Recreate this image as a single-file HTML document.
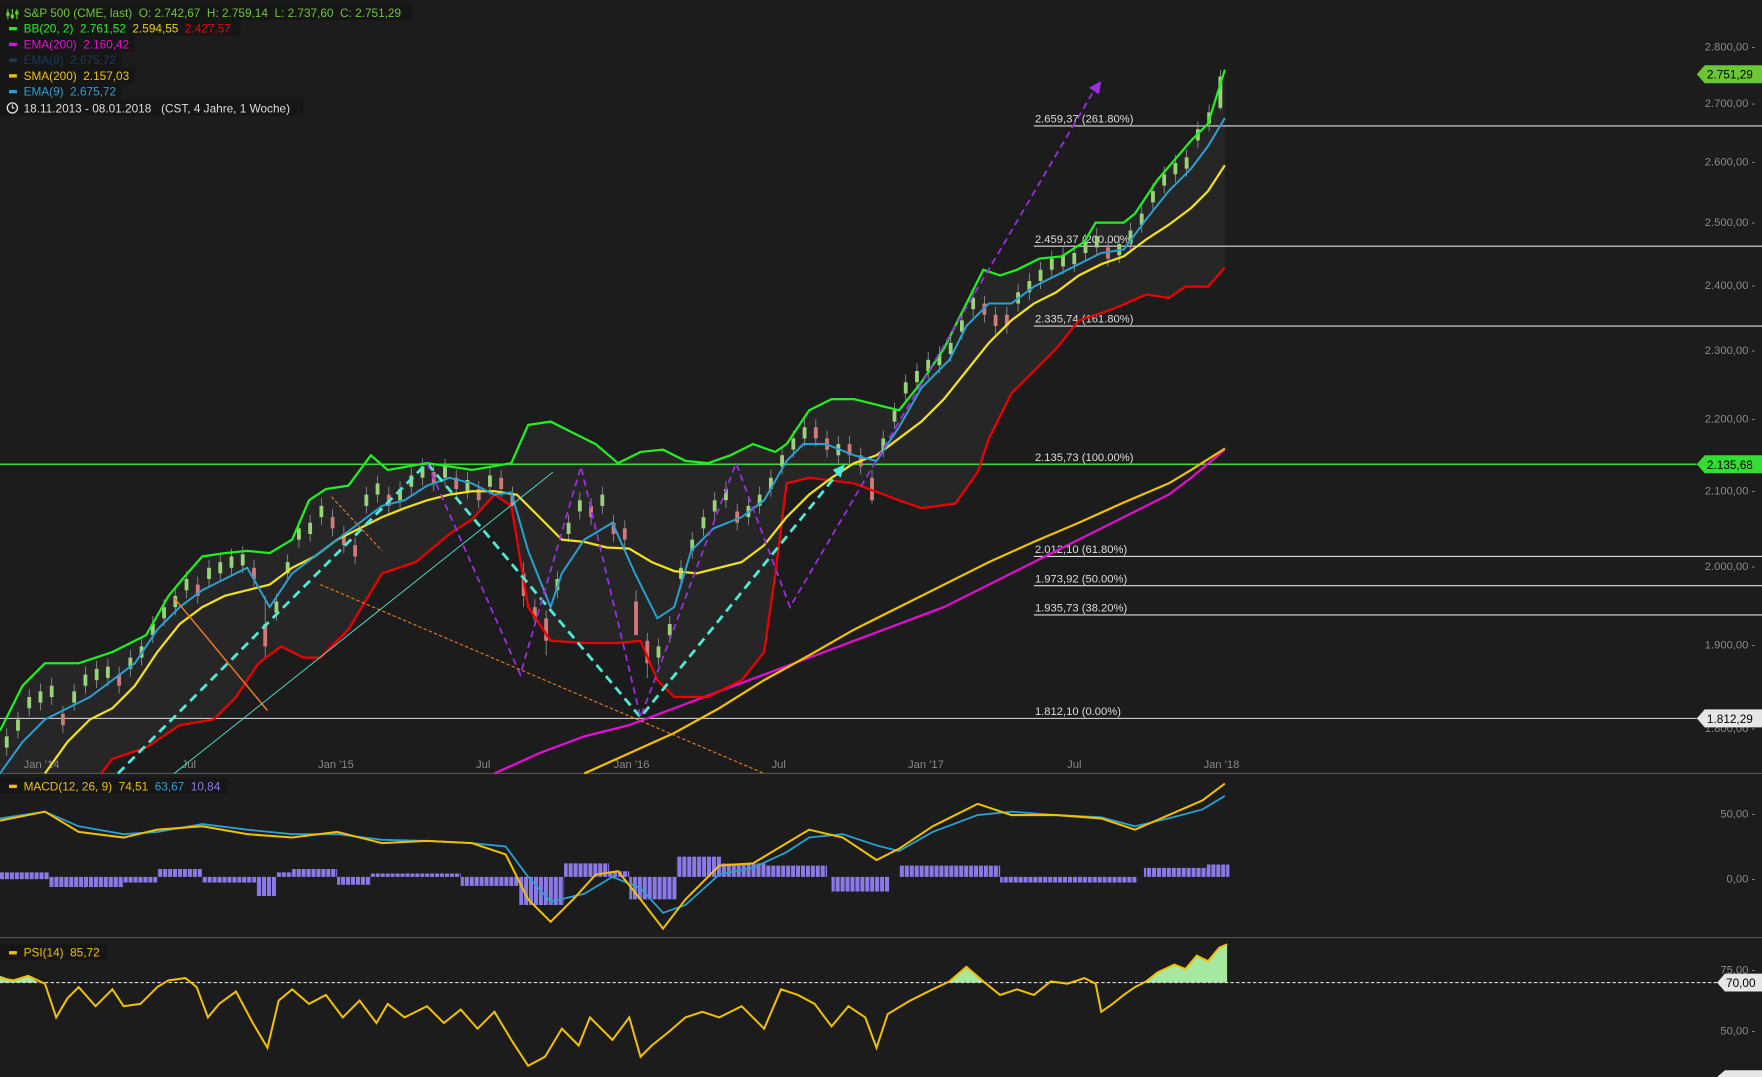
<!DOCTYPE html><html><head><meta charset="utf-8"><style>
html,body{margin:0;padding:0;background:#1c1c1c;overflow:hidden}
svg{display:block;font-family:"Liberation Sans",sans-serif}
</style></head><body>
<svg width="1762" height="1077" viewBox="0 0 1568 958" preserveAspectRatio="none" xmlns="http://www.w3.org/2000/svg">
<defs><pattern id="hb" width="4.4" height="10" patternUnits="userSpaceOnUse"><rect width="3.6" height="10" fill="#8a7ae8"/></pattern></defs>
<rect width="1568" height="958" fill="#1c1c1c"/>
<polygon fill="#262626" points="0,650 20,610 40,590 70,590 100,580 130,565 150,530 165,512 180,495 200,492 220,490 240,492 260,480 275,445 290,435 310,432 330,405 345,418 380,412 420,418 455,412 470,378 490,375 510,385 530,395 550,412 570,402 590,400 610,410 630,412 650,405 670,395 690,402 700,395 720,365 740,355 760,355 780,360 800,365 820,340 840,310 860,270 875,240 890,245 905,240 925,230 945,228 965,215 975,198 1000,198 1010,190 1030,160 1060,125 1075,110 1090,62 1090,238 1075,255 1055,255 1040,265 1020,262 990,275 960,285 940,310 920,330 900,350 880,390 870,420 850,448 820,452 800,445 760,430 720,425 700,430 690,510 680,580 660,605 630,620 600,620 585,605 570,570 550,572 520,572 490,570 470,540 455,450 440,440 420,462 400,475 370,500 340,510 310,560 285,585 270,585 250,575 230,590 210,620 190,640 160,645 130,665 100,675 90,688 0,688"/>
<line x1="0" y1="688" x2="1568" y2="688" stroke="#555"/>
<line x1="0" y1="834" x2="1568" y2="834" stroke="#555"/>
<g font-size="10" fill="#888" text-anchor="middle">
<text x="37" y="683">Jan '14</text><text x="168" y="683">Jul</text><text x="299" y="683">Jan '15</text><text x="430" y="683">Jul</text><text x="562" y="683">Jan '16</text><text x="693" y="683">Jul</text><text x="824" y="683">Jan '17</text><text x="956" y="683">Jul</text><text x="1087" y="683">Jan '18</text>
</g>
<g font-size="10" fill="#8a8a8a" text-anchor="end">
<text x="1562" y="45">2.800,00 -</text><text x="1562" y="95">2.700,00 -</text><text x="1562" y="147">2.600,00 -</text><text x="1562" y="201">2.500,00 -</text><text x="1562" y="257">2.400,00 -</text><text x="1562" y="315">2.300,00 -</text><text x="1562" y="376">2.200,00 -</text><text x="1562" y="440">2.100,00 -</text><text x="1562" y="507">2.000,00 -</text><text x="1562" y="577">1.900,00 -</text><text x="1562" y="651">1.800,00 -</text>
<text x="1562" y="727">50,00 -</text><text x="1562" y="785">0,00 -</text>
<text x="1562" y="866">75,00 -</text><text x="1562" y="920">50,00 -</text>
</g>
<g stroke="#ddd" stroke-width="1">
<line x1="920" y1="112" x2="1568" y2="112"/><line x1="920" y1="219" x2="1568" y2="219"/><line x1="920" y1="290" x2="1568" y2="290"/>
<line x1="920" y1="495" x2="1568" y2="495"/><line x1="920" y1="521" x2="1568" y2="521"/><line x1="920" y1="547" x2="1568" y2="547"/>
<line x1="0" y1="639" x2="1510" y2="639"/>
</g>
<line x1="0" y1="413" x2="1510" y2="413" stroke="#33dd33" stroke-width="1.5"/>
<g font-size="10" fill="#ddd">
<text x="921" y="109">2.659,37 (261.80%)</text><text x="921" y="216">2.459,37 (200.00%)</text><text x="921" y="287">2.335,74 (161.80%)</text><text x="921" y="410">2.135,73 (100.00%)</text><text x="921" y="492">2.012,10 (61.80%)</text><text x="921" y="518">1.973,92 (50.00%)</text><text x="921" y="544">1.935,73 (38.20%)</text><text x="921" y="636">1.812,10 (0.00%)</text>
</g>
<!-- wicks -->
<path stroke="#999" stroke-width="0.7" fill="none" d="M6 648v24M16 633v24M26 613v24M36 608v24M46 603v24M56 628v24M66 608v24M76 593v24M86 588v24M96 586v24M106 593v24M116 578v24M126 568v24M136 548v24M146 533v24M156 523v24M166 508v24M176 513v24M186 498v24M196 493v24M206 488v24M216 486v24M226 498v24M236 530v55M246 528v24M256 493v24M266 463v24M276 458v24M286 443v24M296 453v24M306 468v24M316 478v24M326 433v24M336 423v24M346 433v24M356 428v24M366 416v24M376 408v24M386 413v24M396 408v24M406 418v24M416 420v24M426 428v24M436 416v24M446 418v24M456 433v24M466 500v40M476 533v24M486 543v40M496 508v24M506 458v24M516 438v24M526 443v24M536 433v24M546 458v24M556 463v24M566 525v40M576 563v40M586 568v24M596 548v24M606 498v24M616 473v24M626 453v24M636 438v24M646 428v24M656 448v24M666 443v24M676 433v24M686 418v24M696 398v24M706 383v24M716 373v24M726 373v24M736 383v24M746 388v24M756 388v24M766 398v24M776 418v30M786 383v24M796 358v24M806 333v24M816 323v24M826 313v24M836 308v24M846 298v24M856 278v24M866 258v24M876 263v24M886 273v24M896 273v24M906 253v24M916 243v24M926 233v24M936 223v24M946 220v24M956 218v24M966 208v24M976 203v24M986 213v24M996 210v24M1006 198v24M1016 183v24M1026 163v24M1036 148v24M1046 138v24M1056 133v24M1066 108v24M1076 93v24M1086 62v36"/>
<path stroke="#9ad27a" stroke-width="3.4" fill="none" d="M6 655v10M16 640v10M26 620v10M36 615v10M46 610v10M66 615v10M76 600v10M86 595v10M96 593v10M116 585v10M126 575v10M136 555v10M146 540v10M156 530v10M166 515v10M186 505v10M196 500v10M206 495v10M216 493v10M246 535v10M256 500v10M266 470v10M276 465v10M286 450v10M326 440v10M336 430v10M356 435v10M366 423v10M376 415v10M396 415v10M416 427v10M436 423v10M496 515v10M506 465v10M516 445v10M536 440v10M586 575v10M596 555v10M606 505v10M616 480v10M626 460v10M636 445v10M646 435v10M666 450v10M676 440v10M686 425v10M696 405v10M706 390v10M716 380v10M746 395v10M786 390v10M796 365v10M806 340v10M816 330v10M826 320v10M836 315v10M846 305v10M856 285v10M866 265v10M906 260v10M916 250v10M926 240v10M936 230v10M946 227v10M956 225v10M966 215v10M976 210v10M996 217v10M1006 205v10M1016 190v10M1026 170v10M1036 155v10M1046 145v10M1056 140v10M1066 115v10M1076 100v10M1086 68v28"/>
<path stroke="#d07a7a" stroke-width="3.4" fill="none" d="M56 635v10M106 600v10M176 520v10M226 505v10M236 555v20M296 460v10M306 475v10M316 485v10M346 440v10M386 420v10M406 425v10M426 435v10M446 425v10M456 440v10M466 510v20M476 540v10M486 550v20M526 450v10M546 465v10M556 470v10M566 535v30M576 570v20M656 455v10M726 380v10M736 390v10M756 395v10M766 405v10M776 425v20M876 270v10M886 280v10M896 280v10M986 220v10"/>
<g fill="none">
<polyline stroke="#e010d0" stroke-width="2" points="440,688 480,670 520,655 560,645 600,630 640,615 680,600 720,585 760,570 800,555 840,540 880,520 920,500 960,480 1000,460 1040,440 1060,425 1090,400"/>
<polyline stroke="#f0c000" stroke-width="2" points="520,688 560,670 600,652 640,630 680,605 720,583 760,560 800,540 840,520 880,500 920,482 960,465 1000,447 1040,430 1060,418 1090,399"/>
<polyline stroke="#22ee22" stroke-width="2" points="0,650 20,610 40,590 70,590 100,580 130,565 150,530 165,512 180,495 200,492 220,490 240,492 260,480 275,445 290,435 310,432 330,405 345,418 380,412 420,418 455,412 470,378 490,375 510,385 530,395 550,412 570,402 590,400 610,410 630,412 650,405 670,395 690,402 700,395 720,365 740,355 760,355 780,360 800,365 820,340 840,310 860,270 875,240 890,245 905,240 925,230 945,228 965,215 975,198 1000,198 1010,190 1030,160 1060,125 1075,110 1090,62"/>
<polyline stroke="#e00" stroke-width="2" points="90,688 100,675 130,665 160,645 190,640 210,620 230,590 250,575 270,585 285,585 310,560 340,510 370,500 400,475 420,462 440,440 455,450 470,540 490,570 520,572 550,572 570,570 585,605 600,620 630,620 660,605 680,580 690,510 700,430 720,425 760,430 800,445 820,452 850,448 870,420 880,390 900,350 920,330 940,310 960,285 990,275 1020,262 1040,265 1055,255 1075,255 1090,238"/>
<polyline stroke="#f0e020" stroke-width="2" points="40,688 60,660 80,640 100,630 120,610 140,580 160,555 180,540 200,530 220,525 240,520 260,505 280,495 300,480 320,470 340,460 360,452 380,445 400,440 420,437 440,437 460,440 480,460 500,480 520,482 540,487 560,488 580,500 600,508 620,510 640,505 660,500 680,485 700,460 720,440 740,425 760,412 780,405 800,390 820,375 840,355 860,330 880,305 900,285 920,270 940,260 960,245 980,235 1000,228 1020,213 1040,200 1060,185 1075,170 1090,147"/>
<polyline stroke="#2a9fd0" stroke-width="1.8" points="0,688 20,660 40,640 60,630 80,620 100,605 120,590 140,560 160,540 180,525 200,515 220,505 240,540 260,510 280,495 300,480 320,465 340,450 360,445 380,432 400,425 420,430 440,440 455,438 470,490 490,540 500,510 520,480 545,465 565,510 585,550 600,540 615,490 635,470 660,460 680,445 700,410 715,395 735,395 760,405 780,410 800,380 820,345 845,320 860,290 880,270 900,270 920,255 940,245 960,235 980,225 1000,222 1020,195 1040,170 1060,150 1075,130 1090,105"/>
</g>
<polyline points="105,688 380,412 570,638 748,418" fill="none" stroke="#4fe8d4" stroke-width="2.5" stroke-dasharray="8,5"/>
<polygon points="752,413 741,418 748,425" fill="#4fe8d4"/>
<polyline points="380,412 463,600 517,415 570,638 655,412 703,540 975,78" fill="none" stroke="#9a2ee0" stroke-width="1.6" stroke-dasharray="6,4"/>
<polygon points="980,72 969,78 978,84" fill="#9a2ee0"/>
<line x1="155" y1="532" x2="238" y2="632" stroke="#ee7a1a" stroke-width="1.3"/>
<line x1="295" y1="442" x2="340" y2="490" stroke="#ee7a1a" stroke-width="1" stroke-dasharray="3,2"/>
<line x1="285" y1="520" x2="680" y2="688" stroke="#ee7a1a" stroke-width="1" stroke-dasharray="3,2"/>
<line x1="155" y1="688" x2="492" y2="420" stroke="#4fe8d4" stroke-width="0.8"/>
<line x1="1512" y1="413" x2="1568" y2="413" stroke="#33dd33"/>
<polygon points="1510,66 1517,58 1568,58 1568,74 1517,74" fill="#6cc832"/><text x="1519" y="70" font-size="10.5" fill="#000">2.751,29</text>
<polygon points="1510,413 1517,405 1568,405 1568,421 1517,421" fill="#33dd33"/><text x="1519" y="417" font-size="10.5" fill="#000">2.135,68</text>
<polygon points="1510,639 1517,631 1568,631 1568,647 1517,647" fill="#e6e6e6"/><text x="1519" y="643" font-size="10.5" fill="#000">1.812,29</text>
<!-- MACD histogram -->
<g fill="url(#hb)">
<rect x="0" y="776" width="44" height="6"/><rect x="44" y="780" width="66" height="9"/><rect x="110" y="780" width="30" height="5"/><rect x="140" y="773" width="40" height="7"/><rect x="180" y="780" width="48" height="5"/><rect x="228" y="780" width="18" height="17"/><rect x="246" y="776" width="14" height="4"/><rect x="260" y="773" width="40" height="7"/><rect x="300" y="780" width="30" height="7"/><rect x="330" y="777" width="80" height="3"/><rect x="410" y="780" width="52" height="8"/><rect x="462" y="780" width="40" height="25"/><rect x="502" y="768" width="40" height="12"/><rect x="542" y="775" width="18" height="5"/><rect x="560" y="780" width="42" height="20"/><rect x="602" y="762" width="40" height="18"/><rect x="642" y="768" width="40" height="12"/><rect x="682" y="770" width="54" height="10"/><rect x="740" y="780" width="52" height="13"/><rect x="800" y="770" width="90" height="10"/><rect x="890" y="780" width="122" height="5"/><rect x="1018" y="772" width="56" height="8"/><rect x="1074" y="769" width="20" height="11"/>
</g>
<polyline fill="none" stroke="#2a9fd0" stroke-width="1.6" points="0,728 40,722 70,735 110,742 140,740 180,733 220,738 260,742 300,742 340,747 380,748 420,750 450,753 470,780 490,802 520,795 545,780 570,790 590,812 610,805 640,778 670,772 700,758 720,745 750,742 780,752 800,757 830,740 870,725 900,722 940,725 980,727 1010,735 1040,728 1070,720 1090,708"/>
<polyline fill="none" stroke="#f0c000" stroke-width="1.8" points="0,730 40,722 70,740 110,745 140,738 180,735 220,742 260,745 300,740 340,750 380,748 420,750 450,760 470,800 490,820 510,800 530,778 550,775 570,800 590,826 610,800 640,770 670,768 700,750 720,738 750,745 780,765 800,755 830,735 870,715 900,725 940,725 980,728 1010,738 1040,725 1070,712 1090,697"/>
<!-- RSI -->
<polygon fill="#a6e8a0" points="1012,874 1020,873 1030,865 1045,858 1055,862 1065,850 1075,855 1085,843 1092,840 1092,874"/>
<polygon fill="#a6e8a0" points="845,874 860,860 875,874"/>
<polygon fill="#a6e8a0" points="0,874 0,868 12,872 25,868 34,874"/>
<line x1="0" y1="874" x2="1530" y2="874" stroke="#ddd" stroke-dasharray="3,2"/>
<polyline fill="none" stroke="#f0c000" stroke-width="1.8" points="0,870 12,872 25,868 40,875 50,905 60,888 70,878 85,895 100,880 110,895 125,893 140,878 150,872 165,870 175,878 185,905 195,893 210,882 225,910 238,932 248,890 260,880 275,893 290,885 305,905 320,890 335,910 345,893 360,905 380,895 395,910 410,898 425,915 440,900 455,925 470,948 485,940 500,915 515,930 525,905 545,925 560,905 570,940 580,930 595,918 610,905 625,900 640,905 660,895 680,915 695,880 710,885 725,893 740,913 755,895 770,905 780,932 790,902 810,890 830,880 845,873 860,860 875,873 890,885 905,880 920,885 935,873 950,875 965,870 975,875 980,900 990,893 1000,885 1010,878 1020,873 1030,865 1045,858 1055,862 1065,850 1075,855 1085,843 1092,840"/>
<polygon points="1528,874 1535,866 1568,866 1568,882 1535,882" fill="#e6e6e6"/><text x="1536" y="878" font-size="10.5" fill="#000">70,00</text>
<polygon points="1528,958 1535,952 1568,952 1568,958" fill="#e6e6e6"/>
<g font-size="10.5">
<rect x="0" y="3" width="367" height="15" fill="#161616"/>
<path d="M7 8v9M11 8v9M15 8v9" stroke="#6cc832" stroke-width="1"/><rect x="5.5" y="11" width="3" height="3" fill="#6cc832"/><rect x="9.5" y="13" width="3" height="3" fill="#6cc832"/><rect x="13.5" y="10" width="3" height="3" fill="#6cc832"/>
<text x="21" y="15" fill="#6cc832" xml:space="preserve">S&amp;P 500 (CME, last)  O: 2.742,67  H: 2.759,14  L: 2.737,60  C: 2.751,29</text>
<rect x="0" y="18" width="214" height="14" fill="#161616"/><rect x="8" y="24" width="7" height="3" fill="#22ee22"/>
<text x="21" y="29" xml:space="preserve"><tspan fill="#22ee22">BB(20, 2)  2.761,52 </tspan><tspan fill="#f0d000"> 2.594,55 </tspan><tspan fill="#e00"> 2.427,57</tspan></text>
<rect x="0" y="32" width="120" height="14" fill="#161616"/><rect x="8" y="38" width="7" height="3" fill="#e010d0"/><text x="21" y="43" fill="#e010d0" xml:space="preserve">EMA(200)  2.160,42</text>
<rect x="0" y="46" width="108" height="14" fill="#161616"/><rect x="8" y="52" width="7" height="3" fill="#1c3a5a"/><text x="21" y="57" fill="#1c3a5a" xml:space="preserve">EMA(9)  2.675,72</text>
<rect x="0" y="60" width="120" height="14" fill="#161616"/><rect x="8" y="66" width="7" height="3" fill="#f0c000"/><text x="21" y="71" fill="#f0c000" xml:space="preserve">SMA(200)  2.157,03</text>
<rect x="0" y="74" width="108" height="14" fill="#161616"/><rect x="8" y="80" width="7" height="3" fill="#2a9fd0"/><text x="21" y="85" fill="#2a9fd0" xml:space="preserve">EMA(9)  2.675,72</text>
<rect x="0" y="88" width="270" height="15" fill="#161616"/><circle cx="11" cy="96" r="4.5" fill="none" stroke="#ddd" stroke-width="1.2"/><path d="M11 93v3h2" stroke="#ddd" fill="none"/><text x="21" y="100" fill="#ddd" xml:space="preserve">18.11.2013 - 08.01.2018   (CST, 4 Jahre, 1 Woche)</text>
<rect x="0" y="692" width="202" height="14" fill="#161616"/><rect x="8" y="698" width="7" height="3" fill="#f0c000"/>
<text x="21" y="703" xml:space="preserve"><tspan fill="#f0c000">MACD(12, 26, 9)  74,51 </tspan><tspan fill="#2a9fd0"> 63,67 </tspan><tspan fill="#8a7ae8"> 10,84</tspan></text>
<rect x="0" y="840" width="95" height="14" fill="#161616"/><rect x="8" y="846" width="7" height="3" fill="#f0c000"/><text x="21" y="851" fill="#f0c000" xml:space="preserve">PSI(14)  85,72</text>
</g>
</svg>
</body></html>
